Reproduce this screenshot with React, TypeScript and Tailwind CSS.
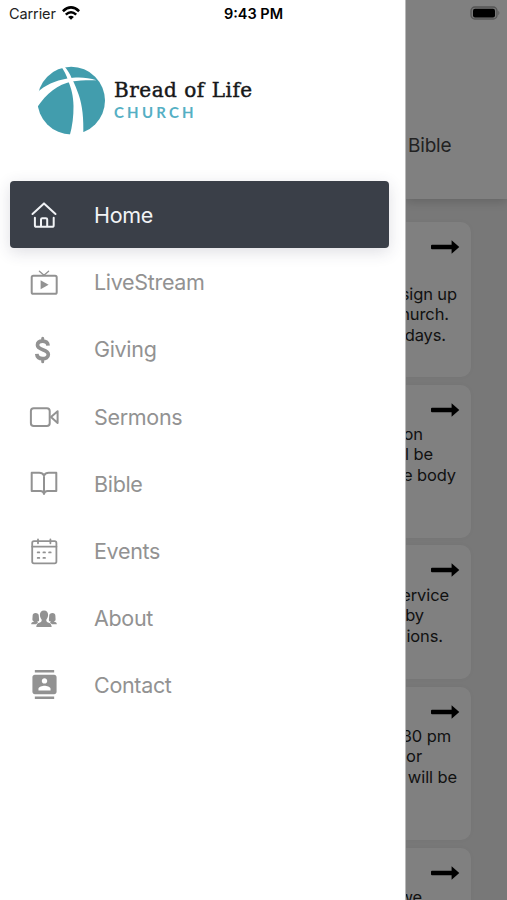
import type { ReactNode } from "react";
import { MdContacts } from "react-icons/md";
import { clsx } from "clsx";

function Icon({ children, width = 2 }: { children: ReactNode; width?: number }) {
  return (
    <svg
      viewBox="0 0 36 36"
      className="h-9 w-9 flex-shrink-0"
      fill="none"
      stroke="currentColor"
      strokeWidth={width}
      strokeLinecap="round"
      strokeLinejoin="round"
    >
      {children}
    </svg>
  );
}

const HomeIcon = (
  <Icon>
    <path d="M6.5 17 18 6.4 29.5 17M8.9 20.8v7.4q0 1.6 1.6 1.6h15.6q1.6 0 1.6-1.6v-7.4M15 29.8v-7.2q0-1.3 1.3-1.3h3.6q1.3 0 1.3 1.3v7.2" />
  </Icon>
);

const TvIcon = (
  <Icon>
    <rect x="5.7" y="11.8" width="25" height="18" rx="1.6" />
    <path d="m13.4 7.2 4.6 4 4.6-4" strokeWidth="1.3" />
    <path d="M14.6 16.2v9l8-4.5z" fill="currentColor" stroke="none" />
  </Icon>
);

const DollarIcon = (
  <Icon width={3.7}>
    <path
      strokeLinecap="butt"
      d="M22.1 14.6c-.3-3.1-2.5-4.5-5.5-4.5-3 0-5.1 1.4-5.1 4 0 5.7 10.8 3.4 10.8 9.4 0 2.8-2.6 4.2-5.6 4.2-3.5 0-5.7-1.6-5.9-4.8"
    />
    <path d="M16.7 7.2v2M16.7 28.8v2" strokeWidth="3" />
  </Icon>
);

const VideoIcon = (
  <Icon>
    <rect x="4.9" y="10.2" width="18.8" height="17.8" rx="2.8" />
    <path d="M25 19.1 31.6 13.2v11.8z" />
  </Icon>
);

const BookIcon = (
  <Icon>
    <path d="M18 10.4v18.6M18 10.6q-1.5-2.8-4.8-2.8H5.7V26h8.8q2.6 0 3.5 2.6.9-2.6 3.5-2.6h8.8V7.8h-7.5q-3.3 0-4.8 2.8" />
  </Icon>
);

const CalendarIcon = (
  <Icon width={1.8}>
    <rect x="6.2" y="8.2" width="24.2" height="22.2" rx="1.8" />
    <path d="M6.2 13.6h24.2M12 6.4v3.9M24.4 6.4v3.9" />
    <path d="M11.7 19.4h1.6M17.4 19.4H19M23.1 19.4h1.6M11.7 24.9h1.6M17.4 24.9H19" />
  </Icon>
);

const PeopleIcon = (
  <Icon>
    <g fill="currentColor" stroke="none">
      <path d="M18 10.4c2.6 0 4.2 1.8 4.1 4.6-.1 2.3-1 3.6-1.7 4.6-.4 1.6.2 2.3 1.6 2.8 2.1.7 3.4 1.2 3.7 4.6H10.3c.3-3.4 1.6-3.9 3.7-4.6 1.4-.5 2-1.2 1.6-2.8-.7-1-1.6-2.3-1.7-4.6-.1-2.8 1.5-4.6 4.1-4.6z" />
      <path d="M9.5 13c2 0 3.2 1 3.3 2.8.1 2.4.6 4.5.1 5.2-.5.7-1.7.4-1.7.8 0 .5.5.8.9 1l-2.2 1.4H5.2c.1-1.7 1-2 2.5-2.4.4-.3 0-.7-.8-1-.9-.3-.3-2.7-.3-5 .1-1.8 1.1-2.8 2.9-2.8z" />
      <path d="M26.5 13c-2 0-3.2 1-3.3 2.8-.1 2.4-.6 4.5-.1 5.2.5.7 1.7.4 1.7.8 0 .5-.5.8-.9 1l2.2 1.4h4.7c-.1-1.7-1-2-2.5-2.4-.4-.3 0-.7.8-1 .9-.3.3-2.7.3-5-.1-1.8-1.1-2.8-2.9-2.8z" />
    </g>
  </Icon>
);

const ContactIcon = (
  <span className="flex h-9 w-9 items-center justify-center">
    <MdContacts className="h-[29px] w-[29px]" />
  </span>
);

const NAV_ITEMS = [
  { label: "Home", icon: HomeIcon, active: true },
  { label: "LiveStream", icon: TvIcon },
  { label: "Giving", icon: DollarIcon },
  { label: "Sermons", icon: VideoIcon },
  { label: "Bible", icon: BookIcon },
  { label: "Events", icon: CalendarIcon },
  { label: "About", icon: PeopleIcon },
  { label: "Contact", icon: ContactIcon },
];

// end = width of the visible part of the line
const CARDS = [
  { size: "h-[155px] mb-2", text: "pt-[62px]", lines: [{ t: "sign up", end: 51 }, { t: "hurch.", end: 43 }, { t: "days.", end: 40 }] },
  { size: "h-[153px] mb-[7px]", text: "pt-[39px]", lines: [{ t: "on", end: 17 }, { t: "l be", end: 27 }, { t: "e body", end: 50 }] },
  { size: "h-[134px] mb-2", text: "pt-[40px]", lines: [{ t: "ervice", end: 43 }, { t: "by", end: 18 }, { t: "ions.", end: 37 }] },
  { size: "h-[153px] mb-2", text: "pt-[39px]", lines: [{ t: "30 pm", end: 45 }, { t: "or", end: 16 }, { t: "will be", end: 51 }] },
  { size: "h-[153px]", text: "pt-[39px]", lines: [{ t: "we", end: 16 }] },
];

function Logo() {
  return (
    <div className="flex items-center pl-[37px] pt-[38px]">
      <svg viewBox="0 0 68 70" className="h-[70px] w-[68px]">
        <circle cx="34.2" cy="34.6" r="33.8" fill="#429dad" />
        {/* stem */}
        <path
          fill="#fff"
          d="M23.8 0H27.2C30.5 4 33 8 34.7 12.2 38 18.5 40 24 41.6 28.5 45.5 40 46.8 52 46.3 70H32.6C35.5 60 36.6 50 36.5 40 36.3 30 34.5 23 31.3 15.3 29.5 9 26.8 4 23.8 0z"
        />
        {/* crossbar */}
        <path
          fill="#fff"
          d="M0 26.5C8 19.5 18 14.6 30.3 12.6 39 10.8 50 11 59.5 14.2 50 14 42 14.3 34.5 15.4 21 18.5 9.5 27 0 41.5z"
        />
      </svg>
      <div className="ml-[9px] whitespace-nowrap">
        <p className="-mt-1 font-['DejaVu_Serif'] text-[20px] leading-[24px] tracking-[0.52px] text-[#17181a] [-webkit-text-stroke:0.45px_#17181a]">
          Bread of Life
        </p>
        <p className="mt-px font-[Lato] text-[15px] font-bold leading-[18px] tracking-[3.2px] text-[#55afc4]">
          CHURCH
        </p>
      </div>
    </div>
  );
}

function Arrow() {
  return (
    <svg viewBox="0 0 30 14" className="absolute right-[11px] top-[17.5px] h-[14px] w-[30px]">
      <path d="M2 4.8h19.6V.2L29.3 7l-7.7 6.8V9.2H2q-1 0-1-1V5.8q0-1 1-1z" fill="#000" />
    </svg>
  );
}

export default function App() {
  return (
    <div className="relative flex h-[900px] w-[507px] overflow-hidden bg-white font-[Inter]">
      {/* Drawer */}
      <aside className="flex w-[406px] flex-shrink-0 flex-col border-r border-[#b9b9b9] bg-white">
        <div className="flex h-7 items-center gap-1.5 pl-[9px] text-[14.5px] text-[#222]">
          <span className="tracking-[-0.1px]">Carrier</span>
          <svg viewBox="0 0 18 14" className="-mt-0.5 h-[14px] w-[18px]" fill="none" stroke="#000" strokeWidth="2.6">
            <path d="M.9 5.2Q9-2.4 17.1 5.2M3.8 8.6q5.2-4.7 10.4 0" />
            <path d="M9 13.7 6.1 10.9q2.9-2.3 5.8 0z" fill="#000" stroke="none" />
          </svg>
        </div>

        <Logo />

        <nav className="ml-2.5 mt-[45px] w-[379px]">
          {NAV_ITEMS.map((item) => (
            <div
              key={item.label}
              className={clsx(
                "flex h-[67.2px] items-center rounded-[4px] pl-4 text-[21.5px] tracking-[-0.32px]",
                item.active
                  ? "bg-[#3a3f48] text-[#f1f3f6] shadow-[0_4px_16px_rgba(50,50,80,0.16)]"
                  : "text-[#929292]"
              )}
            >
              {item.icon}
              <span className="ml-8 pt-px">{item.label}</span>
            </div>
          ))}
        </nav>
      </aside>

      {/* Dimmed page behind the drawer */}
      <main className="flex min-w-0 flex-1 flex-col overflow-hidden bg-[#787878] text-[#111]">
        <header className="z-10 h-[199px] flex-shrink-0 bg-[#808080] shadow-[0_3px_9px_rgba(0,0,0,0.16)]">
          <div className="flex h-[26px] items-center justify-end pr-[6px]">
            <svg viewBox="0 0 31 14" className="h-[14px] w-[31px]">
              <rect x="1" y="1" width="26" height="12" rx="3.8" fill="#777" stroke="#555" strokeWidth="1.3" />
              <rect x="3" y="2.8" width="22" height="8.8" rx="2" fill="#000" />
              <path d="M28.4 4.8q2 2.2 0 4.4z" fill="#555" />
            </svg>
          </div>
          <p className="mt-[106px] pl-0.5 text-[19px] leading-[28px] tracking-[-0.2px] text-[#222]">Bible</p>
        </header>

        <div className="w-[65px] flex-1 pt-[23px]">
          {CARDS.map((card, i) => (
            <section
              key={i}
              className={clsx(
                "relative rounded-r-[10px] bg-[#808080] shadow-[0_0_5px_rgba(0,0,0,0.03)]",
                card.size,
                card.text
              )}
            >
              <Arrow />
              {card.lines.map((line) => (
                <p
                  key={line.t}
                  className="flex h-[20.5px] items-center justify-end whitespace-nowrap text-[16.5px] tracking-[-0.1px]"
                  style={{ width: line.end }}
                >
                  {line.t}
                </p>
              ))}
            </section>
          ))}
        </div>
      </main>

      <p className="absolute left-0 top-0 w-full text-center text-[14.5px] font-semibold leading-7 text-black">
        9:43 PM
      </p>
    </div>
  );
}
